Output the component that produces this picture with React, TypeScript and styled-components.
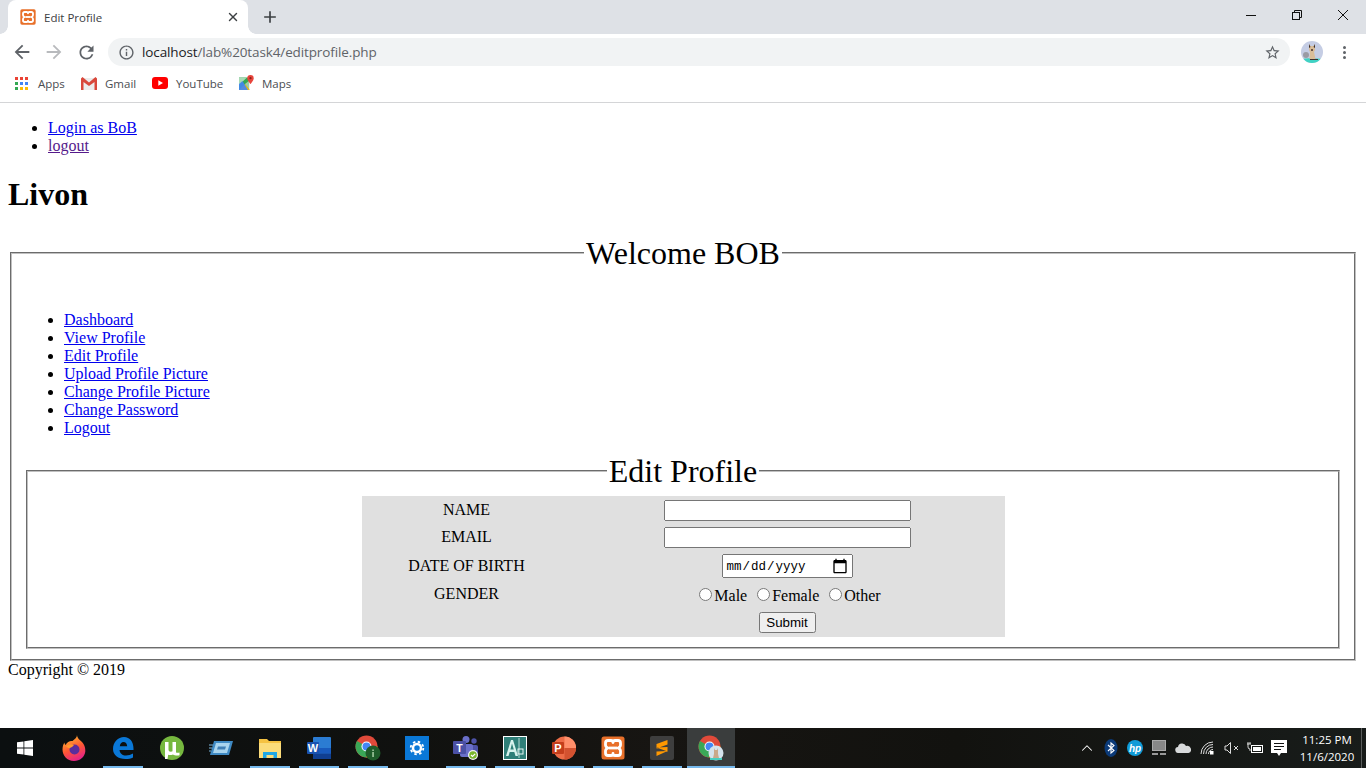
import React from 'react';
import styled, {createGlobalStyle} from 'styled-components';
import {X, ChevronUp} from 'lucide-react';
import {MdArrowBack, MdArrowForward, MdRefresh, MdInfoOutline, MdStarBorder, MdAdd} from 'react-icons/md';

const GlobalStyle = createGlobalStyle`
  html, body { margin: 0; padding: 0; height: 100%; background: #fff; overflow: hidden; }
  body { font-family: "Liberation Serif", "Times New Roman", serif; font-size: 16px; color: #000; }
`;

const Screen = styled.div`
  width: 1366px;
  height: 768px;
  display: flex;
  flex-direction: column;
  overflow: hidden;
`;

/* browser chrome */
const TabStrip = styled.div`
  height: 34px;
  background: #dee1e6;
  display: flex;
  align-items: flex-end;
  flex: none;
  padding-left: 8px;
`;
const Tab = styled.div`
  width: 240px;
  height: 34px;
  background: #fff;
  border-radius: 8px 8px 0 0;
  display: flex;
  align-items: center;
  padding: 0 8px 0 12px;
  box-sizing: border-box;
  position: relative;
  &::before, &::after {
    content: '';
    position: absolute;
    bottom: 0;
    width: 8px;
    height: 8px;
    background: radial-gradient(circle at var(--cx) 0, #dee1e6 7.5px, #fff 8px);
  }
  &::before { left: -8px; --cx: 0; }
  &::after { right: -8px; --cx: 100%; }
`;
const TabTitle = styled.span`
  font: 11.5px "Open Sans", "Noto Sans", sans-serif;
  color: #3c4043;
  margin-left: 8px;
  flex: 1;
`;
const NewTab = styled.div`
  margin-left: 12px;
  width: 20px;
  height: 34px;
  display: flex;
  align-items: center;
  justify-content: center;
  color: #3c4043;
`;
const WindowControls = styled.div`
  margin-left: auto;
  display: flex;
  height: 34px;
`;
const WindowButton = styled.div`
  width: 46px;
  display: flex;
  align-items: center;
  justify-content: center;
  padding-bottom: 5px;
  box-sizing: border-box;
`;

const Toolbar = styled.div`
  height: 36px;
  flex: none;
  background: #fff;
  display: flex;
  align-items: center;
  padding-left: 6px;
`;
const NavButton = styled.div<{$dim?: boolean}>`
  width: 32px;
  display: flex;
  justify-content: center;
  color: ${p => (p.$dim ? '#b8babd' : '#5f6368')};
`;
const Omnibox = styled.div`
  margin-left: 6px;
  width: 1182px;
  height: 28px;
  border-radius: 14px;
  background: #f1f3f4;
  display: flex;
  align-items: center;
  padding: 0 9px 0 10px;
  box-sizing: border-box;
  color: #5f6368;
`;
const Url = styled.span`
  font: 13.5px "Open Sans", "Noto Sans", sans-serif;
  margin-left: 7px;
  flex: 1;
  color: #5f6368;
  letter-spacing: -0.12px;
  b { font-weight: 400; color: #202124; }
`;
const AvatarSlot = styled.div`
  margin-left: 11px;
  flex: none;
  height: 22px;
`;
const MenuDots = styled.div`
  margin-left: 20px;
  width: 3px;
  display: flex;
  flex-direction: column;
  gap: 2px;
  i { display: block; width: 3px; height: 3px; border-radius: 50%; background: #5f6368; }
`;

const BookmarkBar = styled.div`
  height: 33px;
  flex: none;
  background: #fff;
  border-bottom: 1px solid #d4d5d7;
  display: flex;
  align-items: center;
  padding: 0 0 6px 15px;
  box-sizing: border-box;
`;
const Bookmark = styled.div<{$w: number; $gap?: number}>`
  width: ${p => p.$w}px;
  display: flex;
  align-items: center;
  flex: none;
  font: 11.5px "Open Sans", "Noto Sans", sans-serif;
  color: #4a4d51;
  svg { flex: none; margin-right: ${p => p.$gap ?? 8}px; }
`;

/* the php page */
const Page = styled.div`
  flex: 1;
  min-height: 0;
  padding: 0 8px;
  overflow: hidden;
  a { color: #0000ee; }
  a.seen { color: #551a8b; }
`;
const TopList = styled.ul`
  margin: 16px 0;
  padding-left: 40px;
  line-height: 18px;
`;
const Brand = styled.h1`
  font-size: 32px;
  line-height: 37px;
  margin: 21.44px 0;
`;
const Panel = styled.fieldset`
  margin: 0 2px;
  padding: 0 12px 10px;
  border: 2px groove rgb(192, 192, 192);
  min-width: 0;
`;
const PanelTitle = styled.legend`
  font-size: 32px;
  line-height: 37px;
  padding: 0 2px;
  margin: 0 auto;
`;
const SideList = styled.ul`
  margin: 39px 0 16px;
  padding-left: 40px;
  line-height: 18px;
`;
const InnerPanel = styled(Panel)`
  padding-top: 6px;
`;
const FormTable = styled.table`
  width: 50%;
  margin: 0 auto;
  background: #e0e0e0;
  border-spacing: 2px;
  line-height: 18px;
  td { padding: 2px; text-align: center; }
  td:first-child { width: 202px; }
`;
const GenderLabel = styled.td`
  && { padding: 2px 2px 4px; }
`;
const GenderCell = styled.td`
  && { padding: 3px 2px; }
`;
const TextInput = styled.input`
  width: 247px;
  height: 21px;
  box-sizing: border-box;
  margin: 0;
  vertical-align: bottom;
`;
const DateInput = styled.input`
  width: 131px;
  height: 24px;
  box-sizing: border-box;
  margin: 0;
  padding: 3px 2px 1px;
  vertical-align: bottom;
  font: 12.5px "Liberation Mono", "Courier New", monospace;
  &::-webkit-calendar-picker-indicator {
    width: 16px;
    height: 16px;
    padding: 0;
    margin: -2px 1px 0 0;
    background-size: 16px 16px;
  }
`;
const Radio = styled.input`
  margin: 3px 2px 0 6px;
`;
const SubmitButton = styled.input`
  width: 57px;
  height: 21px;
  box-sizing: border-box;
  margin: 0;
  padding: 0;
  vertical-align: bottom;
  font: 13.33px "Liberation Sans", Arial, sans-serif;
`;
const Copyright = styled.div`
  line-height: 18px;
`;

/* windows taskbar */
const Taskbar = styled.div`
  height: 40px;
  flex: none;
  background: linear-gradient(90deg, #0b0f10 0%, #10110f 30%, #171512 48%, #12120f 70%, #181c1a 100%);
  display: flex;
  align-items: stretch;
`;
const Slot = styled.div<{$open?: boolean; $active?: boolean}>`
  width: ${p => (p.$active ? 48 : 49)}px;
  margin-left: ${p => (p.$active ? 1 : 0)}px;
  flex: none;
  display: flex;
  align-items: center;
  justify-content: center;
  position: relative;
  background: ${p => (p.$active ? '#3a3d3d' : 'transparent')};
  &::after {
    content: '';
    display: ${p => (p.$open ? 'block' : 'none')};
    position: absolute;
    bottom: 0;
    left: ${p => (p.$active ? 0 : 4.5)}px;
    right: ${p => (p.$active ? 0 : 4.5)}px;
    height: 2px;
    background: #76b9ed;
  }
`;
const Tray = styled.div`
  margin-left: auto;
  display: flex;
  align-items: center;
  color: #fff;
`;
const TrayIcon = styled.div`
  width: 24px;
  display: flex;
  justify-content: center;
  color: #fff;
`;
const Clock = styled.div`
  width: 68px;
  margin-left: 2px;
  text-align: center;
  font: 11.5px/17px "Open Sans", "Noto Sans", sans-serif;
  color: #fff;
`;
const DesktopPeek = styled.div`
  width: 5px;
  height: 40px;
  border-left: 1px solid #5a5d5c;
  box-sizing: border-box;
`;

const Xampp = ({s}: {s: number}) => (
  <svg width={s} height={s} viewBox="0 0 24 24">
    <rect x="0.5" y="0.5" width="23" height="23" rx="2.5" fill="#e8702a" />
    <path
      d="M7 4.500h3q2 0 2 2 0-2 2-2h3q2.500 0 2.500 2.500v2q0 2-2.500 3 2.500 1 2.500 3v2q0 2.500-2.500 2.500h-3q-2 0-2-2 0 2-2 2H7q-2.500 0-2.500-2.500v-2q0-2 2.500-3-2.500-1-2.500-3V7q0-2.500 2.500-2.500z"
      fill="none"
      stroke="#fff"
      strokeWidth="2.800"
      strokeLinejoin="round"
    />
    <path d="M8 12h8" stroke="#fff" strokeWidth="2.800" />
  </svg>
);

const gridColors = [
  ['#ea4335', '#ea4335', '#ea4335'],
  ['#34a853', '#4285f4', '#4285f4'],
  ['#34a853', '#fbbc05', '#fbbc05'],
];

const AppsGrid = () => (
  <svg width="13" height="13" viewBox="0 0 13 13">
    {gridColors.map((row, r) =>
      row.map((fill, c) => <rect key={`${r}${c}`} x={c * 5} y={r * 5} width="3" height="3" fill={fill} />),
    )}
  </svg>
);

const GmailIcon = () => (
  <svg width="16" height="13" viewBox="0 0 16 13">
    <rect x="1" y="1" width="14" height="12" fill="#ececec" />
    <path d="M0 1.500V13h2.500V5L8 9l5.500-4v8H16V1.500L14.500 0 8 5.500 1.500 0z" fill="#d9483b" />
  </svg>
);

const YoutubeIcon = () => (
  <svg width="16" height="12" viewBox="0 0 16 12">
    <rect width="16" height="12" rx="3" fill="#f00" />
    <path d="M6.300 3.300v5.400L11 6z" fill="#fff" />
  </svg>
);

const MapsIcon = () => (
  <svg width="15" height="16" viewBox="0 0 15 16">
    <path d="M0 2.500h10V15H0z" fill="#34a853" />
    <path d="M0 2.500h8L0 10z" fill="#a8dab5" />
    <path d="M0 15l6-6 5 6z" fill="#fbbc05" />
    <path d="M0 9l3.500-3L9 15H0z" fill="#4285f4" opacity="0.9" />
    <path d="M6 9l5-4v10z" fill="#e8e4d8" opacity="0.6" />
    <path d="M11.500 0A3.200 3.200 0 0 1 14.700 3.200C14.700 5.500 11.500 9 11.500 9S8.300 5.500 8.300 3.200A3.200 3.200 0 0 1 11.500 0z" fill="#e8453c" />
    <circle cx="11.500" cy="3.200" r="1.100" fill="#8a1f17" />
  </svg>
);

const CatAvatar = ({s}: {s: number}) => (
  <svg width={s} height={s} viewBox="0 0 22 22">
    <defs>
      <clipPath id={`cat${s}`}>
        <circle cx="11" cy="11" r="11" />
      </clipPath>
    </defs>
    <g clipPath={`url(#cat${s})`}>
      <rect width="22" height="22" fill="#c5cde4" />
      <path d="M0 18l10-1 12 1v4H0z" fill="#3fd3c4" />
      <circle cx="5" cy="14" r="3" fill="#9a9ba3" />
      <path d="M8 3l1.500 2h3L14 3v6l-1 2 1.500 7h-6L9 11 8 9z" fill="#d9bd98" />
      <path d="M8 3l1.500 3L8 7zM14 3l-1.500 3L14 7z" fill="#3a2c28" />
      <path d="M10 8h2v2h-2z" fill="#6b5448" />
      <path d="M9 18h8v1H9z" fill="#3a3230" />
    </g>
  </svg>
);

const WindowsLogo = () => (
  <svg width="16" height="16" viewBox="0 0 16 16" fill="#fff">
    <path d="M0 2.300l6.500-.9v6.200H0zM7.300 1.300L16 0v7.600H7.300zM0 8.400h6.500v6.200L0 13.700zM7.300 8.400H16V16l-8.700-1.300z" />
  </svg>
);

const Firefox = () => (
  <svg width="24" height="26" viewBox="0 0 24 26">
    <defs>
      <linearGradient id="ff" x1="0.2" y1="0" x2="0.6" y2="1">
        <stop offset="0" stopColor="#ffc12e" />
        <stop offset="0.55" stopColor="#ff5634" />
        <stop offset="1" stopColor="#e3218b" />
      </linearGradient>
    </defs>
    <path d="M15 0c0 3 3 5 5 7 3 3 3.500 7 3.300 9.500-.6 5.500-5.300 9.500-11.300 9.500C5 26 .5 20.500.5 14.500.5 11 1.500 9 2.500 7.500c0 1.500.5 2 1.200 2.500C5 7 8 5.500 10.500 6 13 4 15 2.500 15 0z" fill="url(#ff)" />
    <circle cx="12.500" cy="14.500" r="5" fill="#5a2d9c" />
    <path d="M4 11.500c2-2 5-2.500 8-1.500-1 1.500-3 2.500-4 3-.8.500-3-.5-4-1.500z" fill="#ff9a2e" />
  </svg>
);

const Edge = () => (
  <svg width="22" height="22" viewBox="0 0 22 22">
    <path
      d="M1 12C1 5 6 0 12 0c6 0 9.500 5 9.500 11.500V13H7.500c.3 3.500 3 5.500 6.500 5.500 2.500 0 5-.7 7-2v4c-2 1.200-4.500 1.500-7.500 1.500C6 22 1 18 1 12zm6.800-2.800h7.400C15 6.500 13.500 5 11.500 5 9.500 5 8 6.700 7.800 9.200z"
      fill="#0a78d7"
    />
  </svg>
);

const UTorrent = () => (
  <svg width="24" height="24" viewBox="0 0 24 24">
    <circle cx="12" cy="12" r="12" fill="#76b83f" />
    <path d="M5 6h3.500v7.500c0 1.500 1 2.200 2.300 2.200.8 0 1.300-.2 1.700-.4V6H16v10.500c1.500.3 2.500.2 3.500 0v2.800c-2.500.5-5 .2-6.500-.8-1 .5-2 .6-3 .6-.7 0-1.300-.1-1.800-.4L7.500 23H5z" fill="#fff" />
  </svg>
);

const RemoteApp = () => (
  <svg width="24" height="16" viewBox="0 0 24 16">
    <path d="M5 1h19l-4 14H1z" fill="#3f8ac4" />
    <path d="M7 3h14l-3 10H4z" fill="#a8d4ee" />
    <path d="M9 6.500h8l-1 3H8z" fill="#3f7fb5" />
    <path d="M0 5h4M0 8h3M0 11h2" stroke="#7db7dd" strokeWidth="1" />
  </svg>
);

const Folder = () => (
  <svg width="22" height="20" viewBox="0 0 22 20">
    <path d="M0 1h8l2 2h12v17H0z" fill="#f5c242" />
    <path d="M0 5h22v15H0z" fill="#fbdc7a" />
    <path d="M4 14h14v6h-3.500v-3h-7v3H4z" fill="#1ea7e6" />
  </svg>
);

const Word = () => (
  <svg width="24" height="22" viewBox="0 0 24 22">
    <rect x="6" y="0" width="18" height="22" rx="1" fill="#2b7cd3" />
    <rect x="6" y="11" width="18" height="5.500" fill="#185abd" />
    <rect x="6" y="16.500" width="18" height="5.500" fill="#103f91" />
    <rect x="0" y="5" width="12" height="12" rx="1" fill="#1a52b0" />
    <text x="6" y="15" fontFamily="Liberation Sans, sans-serif" fontWeight="700" fontSize="11" fill="#fff" textAnchor="middle">W</text>
  </svg>
);

const Chrome = ({badge}: {badge: React.ReactNode}) => (
  <svg width="26" height="26" viewBox="0 0 26 26">
    <circle cx="11.500" cy="11.500" r="11" fill="#e04a3a" />
    <path d="M11.500 11.500L2 6a11 11 0 0 0 9.500 16.500z" fill="#3aa757" />
    <path d="M11.500 11.500h11a11 11 0 0 1-11 11z" fill="#fbc116" />
    <circle cx="11.500" cy="11.500" r="5" fill="#fff" />
    <circle cx="11.500" cy="11.500" r="4" fill="#4487f4" />
    {badge}
  </svg>
);

const SettingsTile = () => (
  <svg width="24" height="24" viewBox="0 0 24 24">
    <rect width="24" height="24" fill="#0a78d7" />
    <circle cx="12" cy="12" r="4" fill="none" stroke="#fff" strokeWidth="2.500" />
    <circle cx="12" cy="12" r="6.300" fill="none" stroke="#fff" strokeWidth="1.800" strokeDasharray="2.500 2.450" />
  </svg>
);

const Teams = () => (
  <svg width="26" height="26" viewBox="0 0 26 26">
    <circle cx="13" cy="4.500" r="3.500" fill="#6a6fc9" />
    <circle cx="21" cy="6" r="2.700" fill="#4d52a6" />
    <rect x="15" y="10" width="10" height="9" rx="2" fill="#4d52a6" />
    <rect x="7" y="9" width="13" height="13" rx="2" fill="#6a6fc9" />
    <rect x="0" y="6" width="13" height="13" rx="1" fill="#4b50a5" />
    <text x="6.500" y="16.500" fontFamily="Liberation Sans, sans-serif" fontWeight="700" fontSize="10.500" fill="#fff" textAnchor="middle">T</text>
    <circle cx="20" cy="20" r="5" fill="#f4f4f4" />
    <circle cx="20" cy="20" r="3.800" fill="#7ab62c" />
    <path d="M18 20l1.500 1.500 2.700-2.700" fill="none" stroke="#fff" strokeWidth="1.200" />
  </svg>
);

const AeTile = () => (
  <svg width="24" height="24" viewBox="0 0 24 24">
    <rect width="24" height="24" fill="#fff" />
    <rect x="1" y="1" width="22" height="22" fill="#2f7f78" />
    <path d="M3 20L8 4h2l5 16h-2.500l-1.200-4H6.700l-1.200 4zM7.400 13.500h3.400L9 7.500z" fill="#d7f2ec" />
    <path d="M16 2v20" stroke="#d7f2ec" strokeWidth="0.800" />
    <rect x="15" y="13" width="5" height="5" fill="none" stroke="#e7f5f2" strokeWidth="1" />
  </svg>
);

const PowerPoint = () => (
  <svg width="24" height="24" viewBox="0 0 24 24">
    <circle cx="12.500" cy="12" r="11.500" fill="#ed6c47" />
    <path d="M12.500 .5A11.500 11.500 0 0 1 24 12H12.500z" fill="#ff8f6b" />
    <path d="M12.500 12H24a11.500 11.500 0 0 1-11.500 11.500z" fill="#d35230" />
    <rect x="0" y="6" width="12" height="12" rx="1" fill="#c43e1c" />
    <text x="6" y="16" fontFamily="Liberation Sans, sans-serif" fontWeight="700" fontSize="11" fill="#fff" textAnchor="middle">P</text>
  </svg>
);

const Sublime = () => (
  <svg width="24" height="24" viewBox="0 0 24 24">
    <rect width="24" height="24" rx="2" fill="#3e3e3e" />
    <path d="M17.500 4v4.500L6.500 12.500V8zM6.500 11.500l11 4V11zM17.500 15L6.500 20v-4.500z" fill="#ff9800" />
  </svg>
);

const Bluetooth = () => (
  <svg width="14" height="18" viewBox="0 0 14 18">
    <ellipse cx="7" cy="9" rx="6.500" ry="9" fill="#0b3a78" />
    <path d="M4 6l6 5.500L7 14V4l3 2.500L4 12" fill="none" stroke="#fff" strokeWidth="1.100" />
  </svg>
);

const HpLogo = () => (
  <svg width="16" height="16" viewBox="0 0 16 16">
    <circle cx="8" cy="8" r="8" fill="#0f9bd7" />
    <text x="8" y="11.500" fontFamily="Liberation Sans, sans-serif" fontStyle="italic" fontWeight="700" fontSize="10" fill="#fff" textAnchor="middle">hp</text>
  </svg>
);

const NetworkBox = () => (
  <svg width="14" height="16" viewBox="0 0 14 16">
    <rect x="0.500" y="0.500" width="13" height="10" fill="#888" stroke="#aaa" />
    <path d="M0 13h6v2H0zM8 13h6v2H8z" fill="#999" />
  </svg>
);

const Cloud = () => (
  <svg width="16" height="10" viewBox="0 0 16 10">
    <path d="M3.500 10a3 3 0 0 1-.5-6 4.200 4.200 0 0 1 8-1 3.500 3.500 0 0 1 2.500 7z" fill="#d8dadb" />
  </svg>
);

const Wifi = () => (
  <svg width="14" height="14" viewBox="0 0 14 14" fill="none" stroke="#ddd" strokeWidth="1">
    <path d="M1 13A12 12 0 0 1 13 1M3.500 13A9.500 9.500 0 0 1 13 3.500M6 13a7 7 0 0 1 7-7M8.500 13A4.500 4.500 0 0 1 13 8.500" />
    <rect x="10" y="10" width="3.500" height="3.500" fill="#fff" stroke="none" />
  </svg>
);

const Mute = () => (
  <svg width="15" height="14" viewBox="0 0 15 14" fill="none" stroke="#ddd" strokeWidth="1">
    <path d="M1 5v4h2l3.500 3.500v-11L3 5z" />
    <path d="M10 5l4 4M14 5l-4 4" />
  </svg>
);

const Battery = () => (
  <svg width="16" height="12" viewBox="0 0 16 12" fill="none">
    <rect x="4.500" y="3.500" width="11" height="7" stroke="#fff" />
    <rect x="6" y="5" width="8" height="4" fill="#fff" />
    <path d="M1 2v3a2 2 0 0 0 2 2v2M0 2h4M1 0v2M3 0v2" stroke="#fff" strokeWidth="0.800" />
  </svg>
);

const Notice = () => (
  <svg width="16" height="16" viewBox="0 0 16 16">
    <path d="M0 0h16v13H10l-2 3-2-3H0z" fill="#fff" />
    <path d="M3 3.500h10M3 6.500h10M3 9.500h7" stroke="#111" strokeWidth="1" />
  </svg>
);

const taskApps: {icon: React.ReactNode; open?: boolean; active?: boolean}[] = [
  {icon: <Firefox />},
  {icon: <Edge />, open: true},
  {icon: <UTorrent />},
  {icon: <RemoteApp />},
  {icon: <Folder />, open: true},
  {icon: <Word />, open: true},
  {
    icon: (
      <Chrome
        badge={
          <>
            <circle cx="18" cy="18" r="7.500" fill="#1f5c2a" />
            <rect x="17.300" y="14.500" width="1.500" height="1.500" fill="#a9cfa5" />
            <rect x="17.300" y="17" width="1.500" height="5" fill="#a9cfa5" />
          </>
        }
      />
    ),
    open: true,
  },
  {icon: <SettingsTile />},
  {icon: <Teams />, open: true},
  {icon: <AeTile />, open: true},
  {icon: <PowerPoint />, open: true},
  {icon: <Xampp s={24} />, open: true},
  {icon: <Sublime />, open: true},
  {
    icon: (
      <Chrome
        badge={
          <>
            <circle cx="18" cy="18" r="7.500" fill="#d5e3ec" />
            <path d="M16 13l1 2h2l1-2v6l1 4h-6l1-4z" fill="#c9a98a" />
            <path d="M12 23h12v2H12z" fill="#49cfc0" />
          </>
        }
      />
    ),
    open: true,
    active: true,
  },
];

const topLinks = [
  {label: 'Login as BoB'},
  {label: 'logout', seen: true},
];
const sideLinks = ['Dashboard', 'View Profile', 'Edit Profile', 'Upload Profile Picture', 'Change Profile Picture', 'Change Password', 'Logout'];

export default function App() {
  return (
    <Screen>
      <GlobalStyle />
      <TabStrip>
        <Tab>
          <Xampp s={16} />
          <TabTitle>Edit Profile</TabTitle>
          <X size={14} strokeWidth={2.4} color="#3c4043" />
        </Tab>
        <NewTab>
          <MdAdd size={22} />
        </NewTab>
        <WindowControls>
          <WindowButton>
            <svg width="10" height="10" viewBox="0 0 10 10"><path d="M0 5.500h10" stroke="#111" /></svg>
          </WindowButton>
          <WindowButton>
            <svg width="10" height="10" viewBox="0 0 10 10" fill="none" stroke="#111"><rect x="0.500" y="2.500" width="7" height="7" /><path d="M2.500 2.500v-2h7v7h-2" /></svg>
          </WindowButton>
          <WindowButton>
            <svg width="10" height="10" viewBox="0 0 10 10" stroke="#111"><path d="M0 0l10 10M10 0L0 10" /></svg>
          </WindowButton>
        </WindowControls>
      </TabStrip>

      <Toolbar>
        <NavButton><MdArrowBack size={22} /></NavButton>
        <NavButton $dim><MdArrowForward size={22} /></NavButton>
        <NavButton><MdRefresh size={21} /></NavButton>
        <Omnibox>
          <MdInfoOutline size={17} color="#5f6368" />
          <Url><b>localhost</b>/lab%20task4/editprofile.php</Url>
          <MdStarBorder size={17} color="#5f6368" />
        </Omnibox>
        <AvatarSlot><CatAvatar s={22} /></AvatarSlot>
        <MenuDots><i /><i /><i /></MenuDots>
      </Toolbar>

      <BookmarkBar>
        <Bookmark $w={66} $gap={10}><AppsGrid />Apps</Bookmark>
        <Bookmark $w={71}><GmailIcon />Gmail</Bookmark>
        <Bookmark $w={87}><YoutubeIcon />YouTube</Bookmark>
        <Bookmark $w={70}><MapsIcon />Maps</Bookmark>
      </BookmarkBar>

      <Page>
        <TopList>
          {topLinks.map(l => (
            <li key={l.label}><a href="#" className={l.seen ? 'seen' : undefined}>{l.label}</a></li>
          ))}
        </TopList>
        <Brand>Livon</Brand>
        <Panel>
          <PanelTitle>Welcome BOB</PanelTitle>
          <SideList>
            {sideLinks.map(l => (
              <li key={l}><a href="#">{l}</a></li>
            ))}
          </SideList>
          <InnerPanel>
            <PanelTitle>Edit Profile</PanelTitle>
            <form>
              <FormTable>
                <tbody>
                  <tr>
                    <td>NAME</td>
                    <td><TextInput type="text" /></td>
                  </tr>
                  <tr>
                    <td>EMAIL</td>
                    <td><TextInput type="text" /></td>
                  </tr>
                  <tr>
                    <td>DATE OF BIRTH</td>
                    <td><DateInput type="date" /></td>
                  </tr>
                  <tr>
                    <GenderLabel>GENDER</GenderLabel>
                    <GenderCell>
                      <Radio type="radio" name="gender" />Male{' '}
                      <Radio type="radio" name="gender" />Female{' '}
                      <Radio type="radio" name="gender" />Other
                    </GenderCell>
                  </tr>
                  <tr>
                    <td />
                    <td><SubmitButton type="button" value="Submit" /></td>
                  </tr>
                </tbody>
              </FormTable>
            </form>
          </InnerPanel>
        </Panel>
        <Copyright>Copyright © 2019</Copyright>
      </Page>

      <Taskbar>
        <Slot><WindowsLogo /></Slot>
        {taskApps.map((a, i) => (
          <Slot key={i} $open={a.open} $active={a.active}>{a.icon}</Slot>
        ))}
        <Tray>
          <TrayIcon><ChevronUp size={18} strokeWidth={1.4} /></TrayIcon>
          <TrayIcon><Bluetooth /></TrayIcon>
          <TrayIcon><HpLogo /></TrayIcon>
          <TrayIcon><NetworkBox /></TrayIcon>
          <TrayIcon><Cloud /></TrayIcon>
          <TrayIcon><Wifi /></TrayIcon>
          <TrayIcon><Mute /></TrayIcon>
          <TrayIcon><Battery /></TrayIcon>
          <TrayIcon><Notice /></TrayIcon>
          <Clock>11:25 PM<br />11/6/2020</Clock>
          <DesktopPeek />
        </Tray>
      </Taskbar>
    </Screen>
  );
}
